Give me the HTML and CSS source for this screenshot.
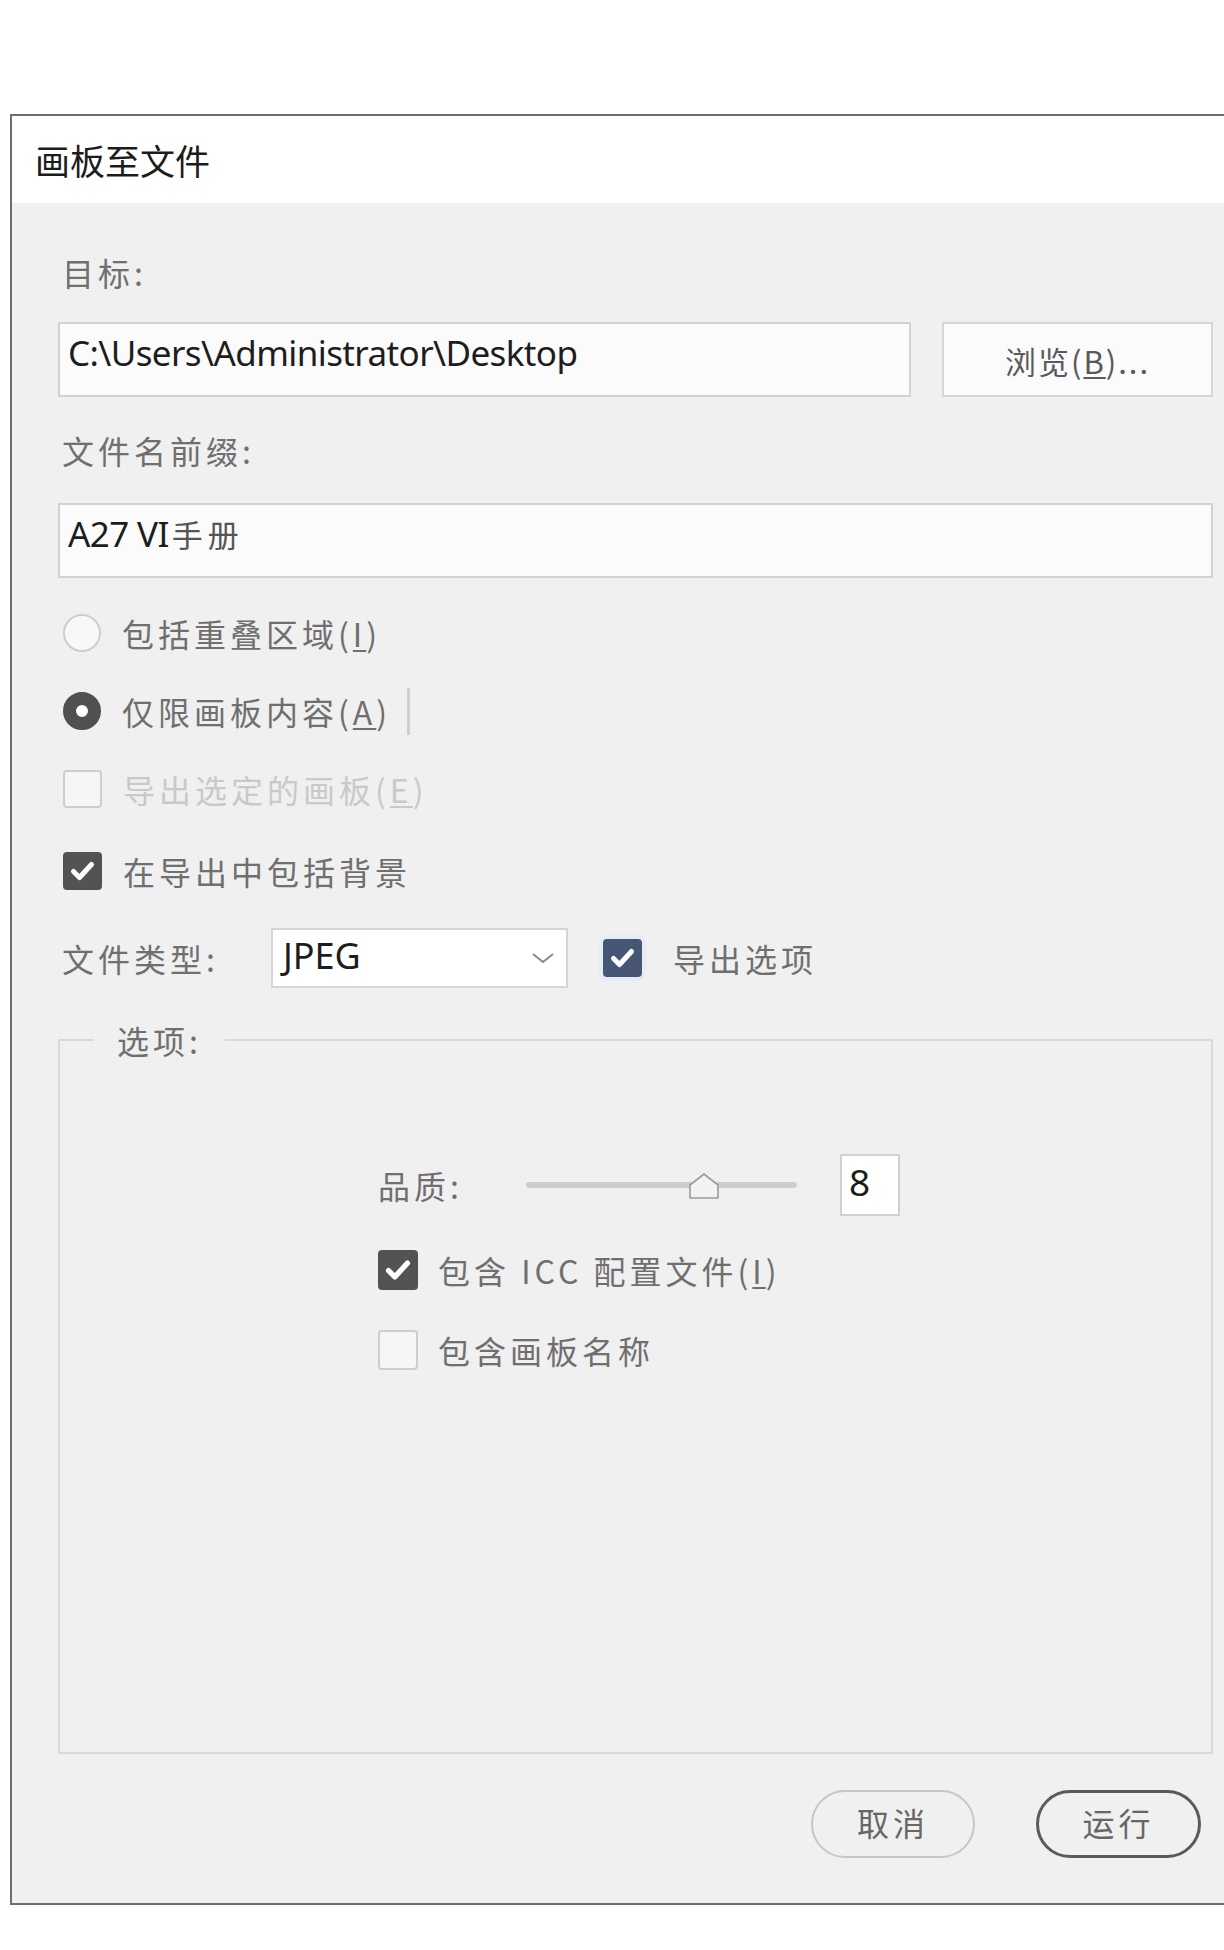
FILE: index.html
```html
<!DOCTYPE html>
<html lang="zh-CN">
<head>
	<meta charset="UTF-8">
	<title>画板至文件</title>
	<link rel="stylesheet" href="styles.css">
</head>
<body>
	<div class="dialog">
		<!-- 标题 -->
		<div class="title">画板至文件</div>
		<div class="content">
			<!-- 目标 -->
			<div class="label-row">目标:</div>
			<div class="field-row">
				<div class="text-field path">C:\Users\Administrator\Desktop</div>
				<button class="browse">浏览(<u>B</u>)...</button>
			</div>
			<!-- 文件名前缀 -->
			<div class="label-row prefix">文件名前缀:</div>
			<div class="field-row name-row">
				<div class="text-field full">A27 VI<span class="cjk">手册</span></div>
			</div>
			<!-- 选项 -->
			<div class="option first">
				<span class="radio"></span>
				<span class="opt-text">包括重叠区域(<u>I</u>)</span>
			</div>
			<div class="option">
				<span class="radio on"></span>
				<span class="opt-text">仅限画板内容(<u>A</u>)</span>
				<span class="caret"></span>
			</div>
			<div class="option disabled">
				<span class="check"></span>
				<span class="opt-text">导出选定的画板(<u>E</u>)</span>
			</div>
			<div class="option last">
				<span class="check on">
					<svg viewBox="0 0 38 38"><path d="M10 19.5 L16 25.5 L28 12.5"/></svg>
				</span>
				<span class="opt-text">在导出中包括背景</span>
			</div>
			<!-- 文件类型 -->
			<div class="type-row">
				<span class="type-label">文件类型:</span>
				<div class="select">
					<span class="select-value">JPEG</span>
					<svg class="chevron" viewBox="0 0 22 10"><path d="M1 1 L11 9 L21 1"/></svg>
				</div>
				<span class="check on blue">
					<svg viewBox="0 0 38 38"><path d="M10 19.5 L16 25.5 L28 12.5"/></svg>
				</span>
				<span class="opt-text export">导出选项</span>
			</div>
			<!-- 选项面板 -->
			<fieldset class="options">
				<legend>选项:</legend>
				<div class="options-body">
					<div class="quality-row">
						<span class="quality-label">品质:</span>
						<div class="slider">
							<div class="track"></div>
							<svg class="thumb" viewBox="0 0 32 28"><path d="M2 13 L16 2 L30 13 L30 26 L2 26 Z"/></svg>
						</div>
						<div class="num-box">8</div>
					</div>
					<div class="option inner icc">
						<span class="check on">
							<svg viewBox="0 0 38 38"><path d="M10 19.5 L16 25.5 L28 12.5"/></svg>
						</span>
						<span class="opt-text">包含 ICC 配置文件(<u>I</u>)</span>
					</div>
					<div class="option inner names">
						<span class="check"></span>
						<span class="opt-text">包含画板名称</span>
					</div>
				</div>
			</fieldset>
			<!-- 按钮区 -->
			<div class="buttons">
				<button class="pill">取消</button>
				<button class="pill primary">运行</button>
			</div>
		</div>
	</div>
</body>
</html>
```

FILE: styles.css
```css
/*reset*/
html, body{
	margin: 0;
	padding: 0;
	background: #fff;
	overflow: hidden;
}
body{
	font: 32px/1.2 "Noto Sans CJK SC", sans-serif;
	color: #6f6f6f;
}
button{
	font: inherit;
	color: inherit;
	cursor: pointer;
}
u{
	text-decoration-thickness: 2px;
	text-underline-offset: 3px;
}
/*main*/
.dialog{
	margin: 114px 0 0 10px;
	border: 2px solid #6e6e6e;
	border-right: none;
	background: #fff;
}
/*标题*/
.title{
	display: flex;
	align-items: center;
	height: 87px;
	padding-left: 23px;
	font-size: 35px;
	color: #1c1c1c;
	background: #fff;
}
.content{
	display: flex;
	flex-direction: column;
	padding: 45px 11px 45px 46px;
	background: #f0f0f0;
}
.label-row{
	display: flex;
	align-items: center;
	height: 48px;
	padding-left: 4px;
	letter-spacing: 4px;
}
.label-row.prefix{
	margin-top: 29px;
}
.field-row{
	display: flex;
	gap: 31px;
	height: 75px;
	margin-top: 26px;
}
.field-row.name-row{
	margin-top: 29px;
}
.text-field{
	display: flex;
	align-items: center;
	box-sizing: border-box;
	height: 100%;
	padding: 0 0 14px 8px;
	border: 2px solid #d2d2d2;
	background: #fbfbfb;
	font-family: "Noto Sans", "Noto Sans CJK SC", sans-serif;
	font-size: 35px;
	letter-spacing: -0.6px;
	color: #1d1d1d;
}
.text-field.path{
	width: 853px;
}
.text-field.full{
	flex: 1;
}
.text-field .cjk{
	margin-left: 3px;
	font-family: "Noto Sans CJK SC", sans-serif;
	font-size: 31px;
	color: #555;
	letter-spacing: 5px;
}
.browse{
	box-sizing: border-box;
	width: 271px;
	height: 100%;
	padding: 2px 0 0;
	border: 2px solid #d6d6d6;
	background: #fbfbfb;
	font-size: 31px;
	letter-spacing: 2px;
	color: #5a5a5a;
}
/*单选、复选*/
.option{
	display: flex;
	align-items: center;
	height: 78px;
	padding-left: 5px;
}
.option.first{
	margin-top: 16px;
}
.option.last{
	margin-top: 4px;
}
.opt-text{
	margin-left: 21px;
	letter-spacing: 4px;
}
.radio{
	box-sizing: border-box;
	width: 38px;
	height: 38px;
	border: 2px solid #cdcdcd;
	border-radius: 50%;
	background: #f8f8f8;
}
.radio.on{
	border: 13px solid #505050;
	background: #fff;
}
.caret{
	width: 3px;
	height: 47px;
	margin-left: 16px;
	background: #cfcfcf;
}
.check{
	display: flex;
	box-sizing: border-box;
	width: 39px;
	height: 38px;
	border: 2px solid #cdcdcd;
	border-radius: 4px;
	background: #f6f6f6;
}
.check.on{
	border: none;
	background: #535353;
}
.check.blue{
	background: #485675;
	box-shadow: 0 0 0 4px #e3ecf7;
}
.check svg{
	width: 100%;
	height: 100%;
	fill: none;
	stroke: #fff;
	stroke-width: 5;
	stroke-linecap: round;
	stroke-linejoin: round;
}
.option.disabled .opt-text{
	color: #c9c9c9;
}
/*文件类型*/
.type-row{
	display: flex;
	align-items: center;
	height: 60px;
	margin-top: 18px;
	padding-left: 4px;
}
.type-label{
	width: 209px;
	letter-spacing: 4px;
}
.select{
	display: flex;
	align-items: center;
	justify-content: space-between;
	box-sizing: border-box;
	width: 297px;
	height: 60px;
	padding: 0 12px 0 10px;
	border: 2px solid #d6d6d6;
	background: #fff;
	margin-right: 35px;
}
.select-value{
	font-family: "Noto Sans", sans-serif;
	font-size: 36px;
	letter-spacing: 0;
	color: #1d1d1d;
	padding-bottom: 4px;
}
.chevron{
	width: 22px;
	height: 10px;
	fill: none;
	stroke: #8a8a8a;
	stroke-width: 2;
}
.opt-text.export{
	margin-left: 31px;
}
/*选项面板*/
.options{
	box-sizing: border-box;
	height: 734px;
	min-width: 0;
	margin: 32px 0 0;
	padding: 0;
	border: 2px solid #d9d9d9;
}
.options legend{
	margin-left: 34px;
	padding: 0 23px;
	line-height: 40px;
	letter-spacing: 4px;
}
.options-body{
	display: flex;
	flex-direction: column;
	padding: 94px 0 0 318px;
}
.quality-row{
	display: flex;
	align-items: center;
	height: 62px;
}
.quality-label{
	width: 148px;
	letter-spacing: 4px;
}
.slider{
	position: relative;
	width: 271px;
	height: 30px;
}
.track{
	position: absolute;
	left: 0;
	right: 0;
	top: 12px;
	height: 6px;
	border-radius: 3px;
	background: #cdcdcd;
}
.thumb{
	position: absolute;
	left: 162px;
	top: 2px;
	width: 32px;
	height: 28px;
	fill: #f2f2f2;
	stroke: #9a9a9a;
	stroke-width: 1.6;
}
.num-box{
	display: flex;
	align-items: center;
	box-sizing: border-box;
	width: 60px;
	height: 62px;
	margin-left: 43px;
	padding: 0 0 6px 7px;
	border: 2px solid #d0d0d0;
	background: #fff;
	font-family: "Noto Sans", sans-serif;
	font-size: 37px;
	color: #1d1d1d;
}
.option.inner{
	height: 48px;
	padding-left: 0;
}
.option.inner .check{
	width: 40px;
	height: 40px;
}
.option.inner .opt-text{
	margin-left: 20px;
}
.option.icc{
	margin-top: 30px;
}
.option.names{
	margin-top: 32px;
}
/*按钮区*/
.buttons{
	display: flex;
	justify-content: flex-end;
	gap: 61px;
	margin-top: 36px;
	padding-right: 12px;
}
.pill{
	box-sizing: border-box;
	width: 164px;
	height: 68px;
	padding: 0 0 4px;
	border: 2px solid #c6c6c6;
	border-radius: 34px;
	background: #f0f0f0;
	letter-spacing: 4px;
	color: #676767;
}
.pill.primary{
	width: 165px;
	border: 3px solid #5a5a5a;
}
```
